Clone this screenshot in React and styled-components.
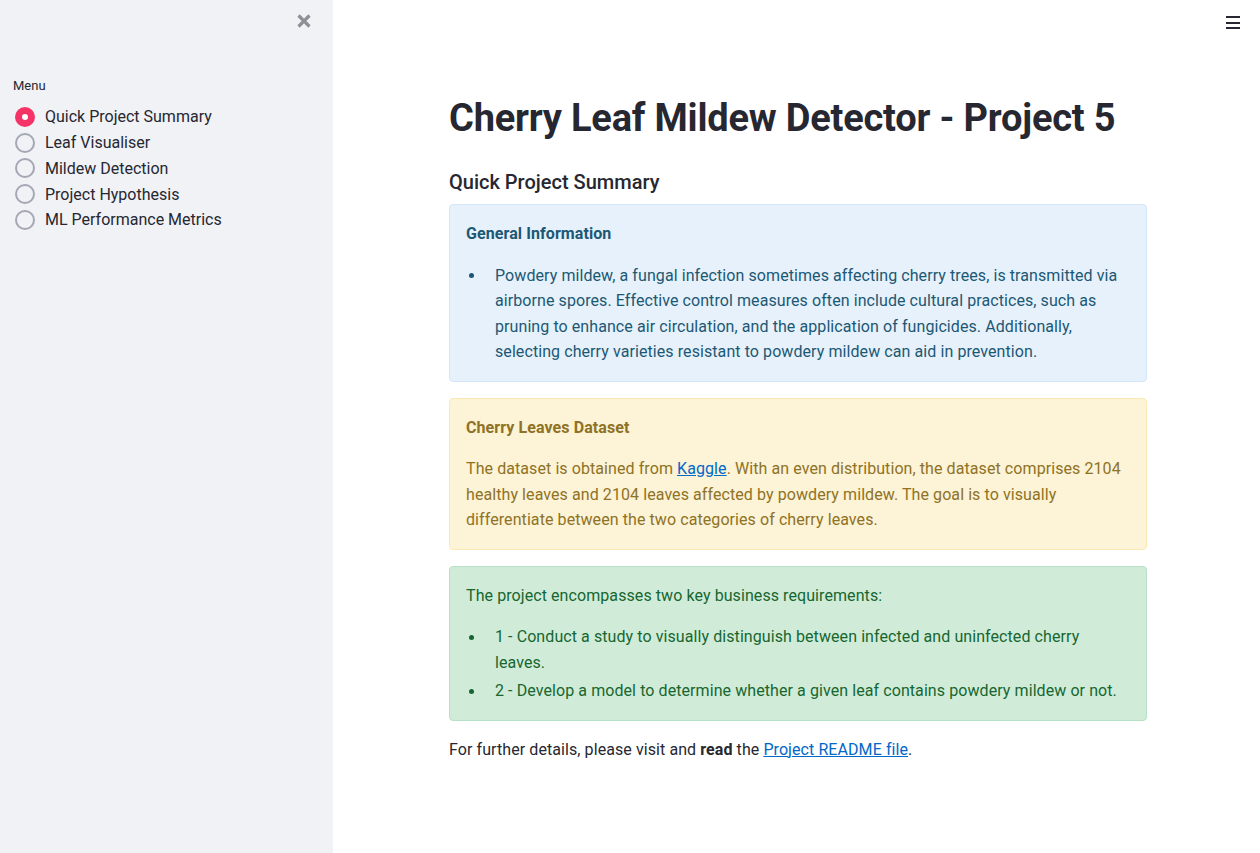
import styled, { createGlobalStyle } from 'styled-components'

const GlobalStyle = createGlobalStyle`
  html, body {
    margin: 0;
    padding: 0;
    background: #ffffff;
  }
  body {
    font-family: Roboto, "Noto Sans", sans-serif;
    color: #262730;
  }
  * { box-sizing: border-box; }
`;

const Page = styled.div`
  display: flex;
  width: 100vw;
  height: 100vh;
  overflow: hidden;
`;

const Sidebar = styled.aside`
  width: 333px;
  flex-shrink: 0;
  background: #f0f2f6;
  display: flex;
  flex-direction: column;
  padding: 10px 13px 0 13px;
`;

const SidebarTop = styled.div`
  display: flex;
  justify-content: flex-end;
  height: 68px;
  padding-right: 5px;
`;

const CloseBtn = styled.button`
  border: none;
  background: none;
  padding: 0;
  width: 22px;
  height: 22px;
  display: flex;
  align-items: center;
  justify-content: center;
  cursor: pointer;
`;

const MenuLabel = styled.div`
  font-size: 13px;
  color: #262730;
  margin-bottom: 11px;
`;

const RadioList = styled.div`
  display: flex;
  flex-direction: column;
`;

const RadioRow = styled.label`
  display: flex;
  align-items: center;
  height: 25.75px;
  font-size: 16px;
  color: #262730;
  cursor: pointer;
`;

const RadioDot = styled.span`
  width: 20px;
  height: 20px;
  border-radius: 50%;
  margin: 0 10px 0 2px;
  flex-shrink: 0;
  background: ${(p) => (p.checked ? '#f63366' : '#f0f2f6')};
  border: ${(p) => (p.checked ? 'none' : '2px solid #a3a8b4')};
  display: flex;
  align-items: center;
  justify-content: center;
  &::after {
    content: '';
    display: ${(p) => (p.checked ? 'block' : 'none')};
    width: 6px;
    height: 6px;
    border-radius: 50%;
    background: #ffffff;
  }
`;

const Main = styled.main`
  flex: 1;
  position: relative;
  display: flex;
  justify-content: center;
  padding-top: 96px;
`;

const MenuIcon = styled.button`
  position: absolute;
  top: 16px;
  right: 20px;
  border: none;
  background: none;
  padding: 0;
  width: 14px;
  height: 13px;
  display: flex;
  flex-direction: column;
  justify-content: space-between;
  span {
    display: block;
    height: 2px;
    background: #262730;
  }
`;

const Content = styled.div`
  width: 698px;
  margin-left: 3px;
`;

const Title = styled.h1`
  font-size: 38px;
  font-weight: 700;
  margin: 0 0 29px 0;
  line-height: 44px;
  letter-spacing: -0.2px;
  color: #262730;
`;

const SubTitle = styled.h3`
  font-size: 20px;
  font-weight: 500;
  margin: 0 0 9px 0;
  line-height: 26px;
  color: #262730;
`;

const tones = {
  info: { bg: '#e6f1fb', border: '#d3e6f8', color: '#1c5874' },
  warning: { bg: '#fdf3d6', border: '#fbe9b5', color: '#8e7225' },
  success: { bg: '#d0ecd9', border: '#b7e1c4', color: '#17662f' },
};

const Alert = styled.div`
  background: ${(p) => tones[p.tone].bg};
  border: 1px solid ${(p) => tones[p.tone].border};
  color: ${(p) => tones[p.tone].color};
  border-radius: 4px;
  padding: 16px;
  margin-bottom: 16px;
  font-size: 16px;
  line-height: 25.5px;
  letter-spacing: 0.08px;
`;

const AlertHead = styled.div`
  font-weight: 700;
  margin: 0 0 16px 0;
`;

const AlertText = styled.p`
  margin: 0;
`;

const Bullets = styled.ul`
  list-style: none;
  margin: ${(p) => (p.tight ? '16px 0 0 0' : '0')};
  padding: 0;
`;

const Item = styled.li`
  display: flex;
  & + & { margin-top: 3px; }
  &::before {
    content: '';
    flex: 0 0 5px;
    height: 5px;
    margin: 10.5px 21px 0 3px;
    border-radius: 50%;
    background: currentColor;
  }
`;

const Link = styled.a`
  color: #0068c9;
  text-decoration: underline;
`;

const Footer = styled.p`
  margin: 12px 0 0 0;
  font-size: 16px;
  line-height: 25.5px;
  letter-spacing: 0.08px;
  color: #262730;
`;

const menu = [
  'Quick Project Summary',
  'Leaf Visualiser',
  'Mildew Detection',
  'Project Hypothesis',
  'ML Performance Metrics',
];

const App = () => {
  return (
    <Page>
      <GlobalStyle />
      <Sidebar>
        <SidebarTop>
          <CloseBtn aria-label="close">
            <svg width="16" height="16" viewBox="0 0 16 16">
              <path d="M2.5 2.5 L13.5 13.5 M13.5 2.5 L2.5 13.5" stroke="#8e9098" strokeWidth="3.2" strokeLinecap="butt" />
            </svg>
          </CloseBtn>
        </SidebarTop>
        <MenuLabel>Menu</MenuLabel>
        <RadioList>
          {menu.map((m, i) => (
            <RadioRow key={m}>
              <RadioDot checked={i === 0} />
              {m}
            </RadioRow>
          ))}
        </RadioList>
      </Sidebar>
      <Main>
        <MenuIcon aria-label="menu">
          <span />
          <span />
          <span />
        </MenuIcon>
        <Content>
          <Title>Cherry Leaf Mildew Detector - Project 5</Title>
          <SubTitle>Quick Project Summary</SubTitle>
          <Alert tone="info">
            <AlertHead>General Information</AlertHead>
            <Bullets>
              <Item>
                Powdery mildew, a fungal infection sometimes affecting cherry trees, is transmitted via
                airborne spores. Effective control measures often include cultural practices, such as
                pruning to enhance air circulation, and the application of fungicides. Additionally,
                selecting cherry varieties resistant to powdery mildew can aid in prevention.
              </Item>
            </Bullets>
          </Alert>
          <Alert tone="warning">
            <AlertHead>Cherry Leaves Dataset</AlertHead>
            <AlertText>
              The dataset is obtained from <Link href="#">Kaggle</Link>. With an even distribution, the
              dataset comprises 2104 healthy leaves and 2104 leaves affected by powdery mildew. The goal
              is to visually differentiate between the two categories of cherry leaves.
            </AlertText>
          </Alert>
          <Alert tone="success">
            <AlertText>The project encompasses two key business requirements:</AlertText>
            <Bullets tight>
              <Item>1 - Conduct a study to visually distinguish between infected and uninfected cherry leaves.</Item>
              <Item>2 - Develop a model to determine whether a given leaf contains powdery mildew or not.</Item>
            </Bullets>
          </Alert>
          <Footer>
            For further details, please visit and <b>read</b> the <Link href="#">Project README file</Link>.
          </Footer>
        </Content>
      </Main>
    </Page>
  );
}

export default App;
